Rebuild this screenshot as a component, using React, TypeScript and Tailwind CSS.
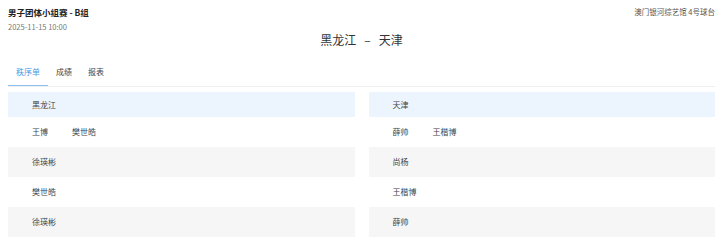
import { useState } from "react";

const tabs = ["秩序单", "成绩", "报表"];

const rows = [
  { left: ["王博", "樊世皓"], right: ["薛帅", "王楷博"] },
  { left: ["徐瑛彬"], right: ["尚杨"] },
  { left: ["樊世皓"], right: ["王楷博"] },
  { left: ["徐瑛彬"], right: ["薛帅"] },
  { left: ["王博"], right: ["尚杨"] },
];

function Column({ team, side }: { team: string; side: "left" | "right" }) {
  return (
    <div className="flex flex-col">
      <div className="h-[25px] bg-[#ecf4fe] flex items-center pl-6 text-[8px] text-[#444]">{team}</div>
      {rows.map((r, i) => (
        <div
          key={i}
          className={`h-[30px] flex items-center pl-6 text-[8px] text-[#444] ${i % 2 === 1 ? "bg-[#f6f6f6]" : "bg-white"}`}
        >
          {(side === "left" ? r.left : r.right).map((n) => (
            <span key={n} className="w-[40px]">{n}</span>
          ))}
        </div>
      ))}
    </div>
  );
}

export default function App() {
  const [tab, setTab] = useState(0);

  return (
    <div
      className="w-[723px] h-[243px] overflow-hidden bg-white px-2 pt-[6px]"
      style={{ fontFamily: '"Noto Sans CJK SC", "Noto Sans", sans-serif' }}
    >
      {/* Header */}
      <div className="flex justify-between">
        <div>
          <div className="text-[8.5px] font-bold text-[#222] leading-[13px]">男子团体小组赛 - B组</div>
          <div className="text-[7.5px] text-[#777] leading-[12px] mt-[2px]">2025-11-15 10:00</div>
        </div>
        <div className="text-[7.5px] text-[#555] leading-[12px]">澳门银河综艺馆 4号球台</div>
      </div>
      <div className="text-center text-[12px] text-[#333] leading-[16px] -mt-[1px]">
        黑龙江&nbsp;&nbsp;&nbsp;–&nbsp;&nbsp;&nbsp;天津
      </div>

      {/* Tabs */}
      <div className="mt-[18px] flex border-b border-[#eeeeee]">
        {tabs.map((t, i) => (
          <button
            key={t}
            onClick={() => setTab(i)}
            className={`whitespace-nowrap text-[8px] leading-[12px] pb-[7px] px-2 ${
              tab === i ? "text-[#4a9be6] border-b border-[#8cc0f0]" : "text-[#444] border-b border-transparent"
            }`}
          >
            {t}
          </button>
        ))}
      </div>

      {/* Lineups */}
      <div className="mt-[5px] grid grid-cols-2 gap-[14px]">
        <Column team="黑龙江" side="left" />
        <Column team="天津" side="right" />
      </div>
    </div>
  );
}
